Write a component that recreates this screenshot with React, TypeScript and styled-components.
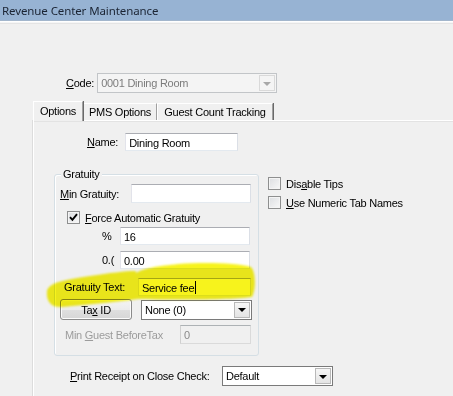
import React from 'react';
import styled, { createGlobalStyle } from 'styled-components';

const GlobalStyle = createGlobalStyle`
  html, body {
    margin: 0;
    padding: 0;
    background: #f0f0f0;
  }
  body {
    font-family: "Liberation Sans", Arial, sans-serif;
    font-size: 11px;
    letter-spacing: -0.25px;
    color: #000;
  }
`;

const Window = styled.div`
  position: relative;
  width: 453px;
  height: 396px;
  overflow: hidden;
  background: #f0f0f0;
`;

const TitleBar = styled.div`
  height: 20px;
  padding-left: 2px;
  display: flex;
  align-items: center;
  background: #97b3d3;
  border-bottom: 1px solid #a3b6cc;
  box-shadow: 0 1px 0 #ffffff, 0 2px 0 #f6f6f6, 0 3px 0 #e4e4e4;
  font-family: "Noto Sans", "Open Sans", sans-serif;
  font-size: 11.5px;
  letter-spacing: -0.1px;
  color: #1b2433;
`;

const Row = styled.div<{ $mt: number; $pl: number; $gap?: number }>`
  display: flex;
  align-items: center;
  margin-top: ${(p) => p.$mt}px;
  padding-left: ${(p) => p.$pl}px;
  gap: ${(p) => p.$gap ?? 0}px;
`;

const Label = styled.span<{ $w?: number; $disabled?: boolean }>`
  display: inline-block;
  flex: none;
  width: ${(p) => (p.$w ? `${p.$w}px` : 'auto')};
  white-space: nowrap;
  color: ${(p) => (p.$disabled ? '#9c9c9c' : '#000')};
  u {
    text-decoration: underline;
    text-underline-offset: 1px;
  }
`;

const TextBox = styled.div<{ $w: number; $h?: number; $disabled?: boolean }>`
  flex: none;
  box-sizing: border-box;
  width: ${(p) => p.$w}px;
  height: ${(p) => p.$h ?? 18}px;
  padding: 1px 0 0 3px;
  display: flex;
  align-items: center;
  background: ${(p) => (p.$disabled ? '#f0f0f0' : '#ffffff')};
  border: 1px solid;
  border-color: ${(p) =>
    p.$disabled ? '#adb2b5 #dadada #dadada #d0d0d0' : '#abadb3 #dbdfe6 #e3e9ef #e2e3ea'};
  color: ${(p) => (p.$disabled ? '#8a8a8a' : '#000')};
  white-space: nowrap;
`;

const Caret = styled.span`
  display: inline-block;
  width: 1px;
  height: 13px;
  margin-left: 1px;
  background: #000;
`;

const ComboBox = styled.div<{ $w: number; $disabled?: boolean }>`
  flex: none;
  box-sizing: border-box;
  width: ${(p) => p.$w}px;
  height: 20px;
  display: flex;
  align-items: center;
  justify-content: space-between;
  padding: 1px 1px 1px 3px;
  background: ${(p) => (p.$disabled ? '#f4f4f4' : '#ffffff')};
  border: 1px solid ${(p) => (p.$disabled ? '#c2c5c8' : '#7a7a7a')};
  color: ${(p) => (p.$disabled ? '#7c7c7c' : '#000')};
  white-space: nowrap;
`;

const DropButton = styled.span<{ $disabled?: boolean }>`
  box-sizing: border-box;
  width: 16px;
  height: 16px;
  display: flex;
  align-items: center;
  justify-content: center;
  border: 1px solid ${(p) => (p.$disabled ? '#d9d9d9' : '#b9b9b9')};
  background: ${(p) =>
    p.$disabled ? '#f4f4f4' : 'linear-gradient(#f6f6f6, #e4e4e4)'};
  &::after {
    content: '';
    border-left: 4px solid transparent;
    border-right: 4px solid transparent;
    border-top: 4px solid ${(p) => (p.$disabled ? '#a8a8a8' : '#000')};
    margin-top: 1px;
  }
`;

const TabStrip = styled.div`
  display: flex;
  align-items: flex-end;
  height: 19px;
  margin-top: 8px;
  padding-left: 33px;
`;

const Tab = styled.div<{ $w: number; $active?: boolean }>`
  position: relative;
  z-index: ${(p) => (p.$active ? 1 : 0)};
  box-sizing: border-box;
  width: ${(p) => p.$w}px;
  height: ${(p) => (p.$active ? 20 : 17)}px;
  margin-bottom: ${(p) => (p.$active ? -1 : 0)}px;
  display: flex;
  align-items: ${(p) => (p.$active ? 'flex-start' : 'center')};
  justify-content: center;
  padding-top: ${(p) => (p.$active ? 3 : 0)}px;
  background: #f0f0f0;
  border-top: 1px solid #ffffff;
  border-left: 1px solid #ffffff;
  border-right: 1px solid #a0a0a0;
  box-shadow: 1px 0 0 #696969;
`;

const Panel = styled.div`
  height: 300px;
  margin-left: 33px;
  border-top: 1px solid #ffffff;
  border-left: 1px solid #ffffff;
  box-shadow: -1px 0 0 #dcdcdc, 0 1px 0 #e3e3e3 inset;
`;

const Middle = styled.div`
  display: flex;
  align-items: flex-start;
  margin-top: 23px;
  padding-left: 20px;
`;

const Group = styled.div`
  position: relative;
  box-sizing: border-box;
  width: 205px;
  height: 182px;
  padding: 9px 0 0 5px;
  border: 1px solid #d5dfe5;
  border-radius: 3px;
  box-shadow: inset 1px 1px 0 #ffffff;
`;

const GroupCaption = styled.span`
  position: absolute;
  top: -7px;
  left: 6px;
  padding: 0 2px;
  background: #f0f0f0;
`;

const CheckList = styled.div`
  display: flex;
  flex-direction: column;
  gap: 6px;
  margin-left: 9px;
  padding-top: 3px;
`;

const CheckRow = styled.label<{ $mt?: number; $pl?: number }>`
  display: flex;
  align-items: center;
  gap: 5px;
  margin-top: ${(p) => p.$mt ?? 0}px;
  padding-left: ${(p) => p.$pl ?? 0}px;
  u {
    text-underline-offset: 1px;
  }
`;

const Box = styled.span`
  box-sizing: border-box;
  width: 13px;
  height: 13px;
  display: flex;
  align-items: center;
  justify-content: center;
  border: 1px solid #8e8f8f;
  background: linear-gradient(135deg, #dcdee1, #f8f8f8);
  box-shadow: inset 0 0 0 1px #f4f4f4;
`;

const PushButton = styled.div`
  box-sizing: border-box;
  width: 72px;
  height: 21px;
  display: flex;
  align-items: center;
  justify-content: center;
  border: 1px solid #8b8b8b;
  border-radius: 3px;
  background: linear-gradient(#f4f4f4 0%, #ececec 50%, #dfdfdf 51%, #d6d6d6 100%);
  box-shadow: inset 0 0 0 1px #fbfbfb;
  u {
    text-underline-offset: 1px;
  }
`;

const Highlight = styled.svg`
  position: absolute;
  left: 0;
  top: 0;
  pointer-events: none;
  mix-blend-mode: multiply;
  filter: blur(0.8px);
`;

const Check = ({ checked }: { checked?: boolean }) => (
  <Box>
    {checked && (
      <svg width="9" height="9" viewBox="0 0 9 9">
        <path d="M1 4.2 L3.4 6.8 L8 1.2" fill="none" stroke="#000" strokeWidth="1.9" />
      </svg>
    )}
  </Box>
);

export default function App() {
  return (
    <Window>
      <GlobalStyle />
      <TitleBar>Revenue Center Maintenance</TitleBar>

      <Row $mt={52} $pl={66} $gap={3}>
        <Label>
          <u>C</u>ode:
        </Label>
        <ComboBox $w={180} $disabled>
          0001 Dining Room
          <DropButton $disabled />
        </ComboBox>
      </Row>

      <TabStrip>
        <Tab $w={50} $active>
          Options
        </Tab>
        <Tab $w={74}>PMS Options</Tab>
        <Tab $w={116}>Guest Count Tracking</Tab>
      </TabStrip>

      <Panel>
        <Row $mt={12} $pl={53} $gap={7}>
          <Label>
            <u>N</u>ame:
          </Label>
          <TextBox $w={113}>Dining Room</TextBox>
        </Row>

        <Middle>
          <Group>
            <GroupCaption>Gratuity</GroupCaption>
            <Row $mt={0} $pl={0}>
              <Label $w={71}>
                <u>M</u>in Gratuity:
              </Label>
              <TextBox $w={120} $h={19} />
            </Row>
            <CheckRow $mt={8} $pl={7}>
              <Check checked />
              <span>
                <u>F</u>orce Automatic Gratuity
              </span>
            </CheckRow>
            <Row $mt={3} $pl={42}>
              <Label $w={18}>%</Label>
              <TextBox $w={130}>16</TextBox>
            </Row>
            <Row $mt={6} $pl={42}>
              <Label $w={18}>0.(</Label>
              <TextBox $w={130}>0.00</TextBox>
            </Row>
            <Row $mt={9} $pl={4}>
              <Label $w={74}>Gratuity Text:</Label>
              <TextBox $w={113}>
                Service fee
                <Caret />
              </TextBox>
            </Row>
            <Row $mt={3} $pl={0} $gap={9}>
              <PushButton>
                Ta<u>x</u>&nbsp;ID
              </PushButton>
              <ComboBox $w={111}>
                None (0)
                <DropButton />
              </ComboBox>
            </Row>
            <Row $mt={5} $pl={5}>
              <Label $w={115} $disabled>
                Min <u>G</u>uest BeforeTax
              </Label>
              <TextBox $w={71} $h={19} $disabled>
                0
              </TextBox>
            </Row>
          </Group>

          <CheckList>
            <CheckRow>
              <Check />
              <span>
                Dis<u>a</u>ble Tips
              </span>
            </CheckRow>
            <CheckRow>
              <Check />
              <span>
                <u>U</u>se Numeric Tab Names
              </span>
            </CheckRow>
          </CheckList>
        </Middle>

        <Row $mt={10} $pl={36}>
          <Label $w={152}>
            <u>P</u>rint Receipt on Close Check:
          </Label>
          <ComboBox $w={111}>
            Default
            <DropButton />
          </ComboBox>
        </Row>
      </Panel>

      <Highlight width="453" height="396" viewBox="0 0 453 396">
        <path
          d="M134 275 C140 268 160 266 178 264 C205 262 238 263 251 267 C256 272 256 290 252 297 C228 300 170 300 136 299 Z"
          fill="#f7f31c"
        />
        <path
          d="M47 291 C49 283 62 280 90 276 C110 273 125 271 136 271 L138 299 C120 302 90 304 62 307 C51 308 46 301 47 291 Z"
          fill="#f7f31c"
        />
      </Highlight>
    </Window>
  );
}
